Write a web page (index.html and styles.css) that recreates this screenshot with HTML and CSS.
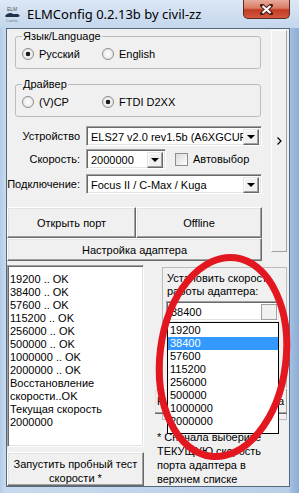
FILE: index.html
```html
<!DOCTYPE html>
<html lang="ru">

<head>
    <meta charset="UTF-8">
    <meta name="viewport" content="width=device-width, initial-scale=1.0">
    <title>ELMConfig 0.2.13b by civil-zz</title>
    <link rel="stylesheet" href="styles.css">
</head>

<body>
    <div class="window">
        <div class="titlebar">
            <svg class="app-icon" width="17" height="16" viewBox="0 0 17 16">
                <text x="3" y="5" font-size="5" font-family="Liberation Sans" fill="#555">ELM</text>
                <path d="M1 10 C3 7, 7 6, 9 8 L14 8 L16 10 L14 11 L2 11 Z" fill="#1f2f4c" />
                <text x="2" y="15.5" font-size="4" font-family="Liberation Sans" fill="#6b7b92">Config</text>
            </svg>
            <span class="title">ELMConfig 0.2.13b by civil-zz</span>
            <div class="close-btn">
                <svg width="13" height="11" viewBox="0 0 13 11">
                    <path d="M2 1.5 L11 9.5 M11 1.5 L2 9.5" stroke="#4a1a12" stroke-width="4" stroke-linecap="round" />
                    <path d="M2.5 2 L10.5 9 M10.5 2 L2.5 9" stroke="#fff" stroke-width="2.2" />
                </svg>
            </div>
        </div>

        <div class="client">
            <div class="top">
                <div class="main">
                    <fieldset class="group">
                        <legend>Язык/Language</legend>
                        <div class="radio-row">
                            <span class="radio"><i class="radio-dot on"></i>Русский</span>
                            <span class="radio"><i class="radio-dot"></i>English</span>
                        </div>
                    </fieldset>
                    <fieldset class="group driver">
                        <legend>Драйвер</legend>
                        <div class="radio-row">
                            <span class="radio"><i class="radio-dot"></i>(V)CP</span>
                            <span class="radio"><i class="radio-dot on"></i>FTDI D2XX</span>
                        </div>
                    </fieldset>

                    <div class="field-row device">
                        <label>Устройство</label>
                        <div class="combo wide">
                            <span class="combo-text">ELS27 v2.0 rev1.5b (A6XGCUF'</span>
                            <span class="combo-btn"><i class="arrow"></i></span>
                        </div>
                    </div>
                    <div class="field-row speed">
                        <label>Скорость:</label>
                        <div class="combo short">
                            <span class="combo-text">2000000</span>
                            <span class="combo-btn"><i class="arrow"></i></span>
                        </div>
                        <span class="checkbox"></span>
                        <span>Автовыбор</span>
                    </div>
                    <div class="field-row link">
                        <label>Подключение:</label>
                        <div class="combo wide">
                            <span class="combo-text">Focus II / C-Max / Kuga</span>
                            <span class="combo-btn"><i class="arrow"></i></span>
                        </div>
                    </div>

                    <div class="btn-row">
                        <div class="btn open">Открыть порт</div>
                        <div class="btn offline">Offline</div>
                    </div>
                    <div class="btn setup">Настройка адаптера</div>
                </div>
                <div class="side">
                    <svg width="5" height="8" viewBox="0 0 5 8">
                        <path d="M0.5 0.5 L4 4 L0.5 7.5" fill="none" stroke="#000" stroke-width="1.2" />
                    </svg>
                </div>
            </div>

            <div class="bottom">
                <div class="left-col">
                    <div class="log">
                        <div>19200 .. OK</div>
                        <div>38400 .. OK</div>
                        <div>57600 .. OK</div>
                        <div>115200 .. OK</div>
                        <div>256000 .. OK</div>
                        <div>500000 .. OK</div>
                        <div>1000000 .. OK</div>
                        <div>2000000 .. OK</div>
                        <div>Восстановление</div>
                        <div>скорости..OK</div>
                        <div>Текущая скорость</div>
                        <div>2000000</div>
                    </div>
                    <div class="btn test">Запустить пробный тест<br>скорости *</div>
                </div>
                <div class="right-col">
                    <div class="speed-box">
                        <div class="speed-label">Установить скорость<br>работы адаптера:</div>
                        <div class="combo speed-combo">
                            <span class="combo-text">38400</span>
                            <span class="combo-btn pressed"></span>
                        </div>
                        <!-- середина надписи закрыта открытым списком -->
                        <div class="btn apply"><span>Н</span><span>а</span></div>
                    </div>
                    <p class="note">* Сначала выберите<br>ТЕКУЩУЮ скорость<br>порта адаптера в<br>верхнем списке</p>
                </div>
            </div>
        </div>

        <!-- открытый список скоростей -->
        <ul class="dropdown-list">
            <li>19200</li>
            <li class="selected">38400</li>
            <li>57600</li>
            <li>115200</li>
            <li>256000</li>
            <li>500000</li>
            <li>1000000</li>
            <li>2000000</li>
        </ul>

        <!-- красная отметка -->
        <svg class="marker" width="299" height="493" viewBox="0 0 299 493">
            <ellipse cx="223" cy="357" rx="63" ry="100" transform="rotate(7 223 357)" fill="none" stroke="#e3171f" stroke-width="7" />
        </svg>
    </div>
</body>

</html>
```

FILE: styles.css
```css
* {
    box-sizing: border-box;
}

body {
    margin: 0;
    background: #aac3e0;
    font-family: "Liberation Sans", Arial, sans-serif;
    font-size: 11px;
    color: #000;
}

.window {
    position: relative;
    width: 299px;
    height: 493px;
    overflow: hidden;
    background: linear-gradient(to right, #b3cbe7 0, #c6d9ee 5px, #b9cfe8 289px, #a0bcdf 291px, #8eaed7 299px);
}

/* заголовок окна */
.titlebar {
    height: 28px;
    display: flex;
    align-items: center;
    padding-left: 4px;
    background: linear-gradient(#dce8f6, #d0dff1 45%, #c4d7ed);
}

.app-icon {
    margin-right: 6px;
}

.title {
    font-family: "Noto Sans", "Liberation Sans", sans-serif;
    font-size: 13px;
}

.close-btn {
    margin-left: auto;
    margin-right: 9px;
    align-self: flex-start;
    width: 47px;
    height: 19px;
    border: 1px solid #5e2a22;
    border-top: none;
    border-radius: 0 0 5px 5px;
    background: linear-gradient(#e8aa9c, #d97b63 45%, #c23a22 55%, #d25a3f);
    display: flex;
    align-items: center;
    justify-content: center;
}

/* клиентская область */
.client {
    margin-left: 6px;
    width: 284px;
    height: 459px;
    border: 1px solid #56687b;
    background: #f0f0f0;
}

.top {
    display: flex;
    height: 234px;
}

.main {
    width: 255px;
}

.group {
    margin: 1px 0 0 8px;
    width: 246px;
    padding: 0 6px 4px;
    border: 1px solid #bcbcbc;
    border-radius: 3px;
}

.group.driver {
    margin-top: 9px;
}

.group legend {
    padding: 0 1px;
    line-height: 13px;
    height: 13px;
}

.radio-row {
    display: flex;
    align-items: center;
    height: 20px;
    margin-top: 1px;
}

.radio {
    display: flex;
    align-items: center;
    width: 80px;
}

.radio-dot {
    width: 12px;
    height: 12px;
    margin-right: 5px;
    border: 1px solid #8b8b8b;
    border-radius: 50%;
    background: radial-gradient(circle, #fff 0, #e2e2e2 100%);
}

.radio-dot.on {
    background: radial-gradient(circle, #1c1c1c 0, #1c1c1c 2px, #f4f4f4 2.6px, #dedede 100%);
}

.field-row {
    display: flex;
    align-items: center;
    height: 20px;
}

.field-row label {
    width: 73px;
    margin-right: 6px;
    text-align: right;
}

.field-row.device {
    margin-top: 9px;
}

.field-row.speed {
    margin-top: 3px;
}

.field-row.link {
    margin-top: 5px;
}

.combo {
    display: flex;
    height: 20px;
    padding: 2px;
    background: #fff;
    border: 1px solid;
    border-color: #a0a0a0 #fff #fff #a0a0a0;
    box-shadow: inset 1px 1px #696969, inset -1px -1px #e3e3e3;
}

.combo.wide {
    width: 176px;
}

.combo.short {
    width: 80px;
}

.combo-text {
    flex: 1;
    padding-left: 2px;
    line-height: 16px;
    overflow: hidden;
    white-space: nowrap;
}

.combo-btn {
    width: 16px;
    height: 16px;
    display: flex;
    align-items: center;
    justify-content: center;
    background: #f0f0f0;
    border: 1px solid;
    border-color: #e3e3e3 #696969 #696969 #e3e3e3;
    box-shadow: inset -1px -1px #a0a0a0, inset 1px 1px #fff;
}

.combo-btn.pressed {
    border-color: #a0a0a0;
    box-shadow: none;
}

.arrow {
    width: 0;
    height: 0;
    border-left: 4px solid transparent;
    border-right: 4px solid transparent;
    border-top: 4px solid #000;
}

.checkbox {
    width: 13px;
    height: 13px;
    margin: 0 5px 0 9px;
    border: 1px solid #8e8f8f;
    background: linear-gradient(135deg, #dadada, #fff);
}

/* кнопки */
.btn {
    display: flex;
    align-items: center;
    justify-content: center;
    text-align: center;
    background: #f0f0f0;
    border: 1px solid;
    border-color: #fff #696969 #696969 #fff;
    box-shadow: inset -1px -1px #a0a0a0, inset 1px 1px #e3e3e3;
}

.btn-row {
    display: flex;
    height: 31px;
    margin-top: 13px;
}

.btn.open {
    width: 129px;
}

.btn.offline {
    flex: 1;
}

.btn.setup {
    height: 23px;
}

.side {
    width: 16px;
    height: 222px;
    margin: 1px 0 0 9px;
    display: flex;
    align-items: center;
    justify-content: center;
    border: 1px solid;
    border-color: #fff #a0a0a0 #a0a0a0 #fff;
}

/* нижняя часть */
.bottom {
    display: flex;
    height: 223px;
}

.left-col {
    width: 137px;
}

.log {
    margin-top: 2px;
    height: 182px;
    padding: 7px 0 0 2px;
    line-height: 13px;
    background: #fff;
    border: 1px solid;
    border-color: #a0a0a0 #fff #fff #a0a0a0;
    box-shadow: inset 1px 1px #696969, inset -1px -1px #e3e3e3;
}

.btn.test {
    margin-top: 5px;
    height: 34px;
    padding-top: 3px;
    line-height: 14px;
}

.right-col {
    width: 132px;
    margin-left: 11px;
    overflow: hidden;
}

.speed-box {
    margin: 4px 0 0 7px;
    height: 153px;
    padding: 4px 6px 0 3px;
    border: 1px solid #bcbcbc;
    line-height: 13px;
}

.speed-label {
    padding-left: 1px;
}

.speed-combo {
    margin-top: 3px;
    height: 20px;
}

.btn.apply {
    margin: 67px -8px 0 -12px;
    height: 26px;
    padding: 0 3px 0 2px;
    justify-content: space-between;
}

.note {
    margin: 10px 0 0;
    padding-left: 2px;
    line-height: 14px;
    white-space: nowrap;
}

/* открытый список */
.dropdown-list {
    position: absolute;
    left: 167px;
    top: 322px;
    width: 112px;
    height: 112px;
    margin: 0;
    padding: 1px 0 0;
    list-style: none;
    background: #fff;
    border: 1px solid #000;
}

.dropdown-list li {
    height: 13px;
    line-height: 13px;
    padding-left: 2px;
}

.dropdown-list li.selected {
    background: #3399ff;
    color: #fff;
}

.marker {
    position: absolute;
    left: 0;
    top: 0;
    pointer-events: none;
}
```
